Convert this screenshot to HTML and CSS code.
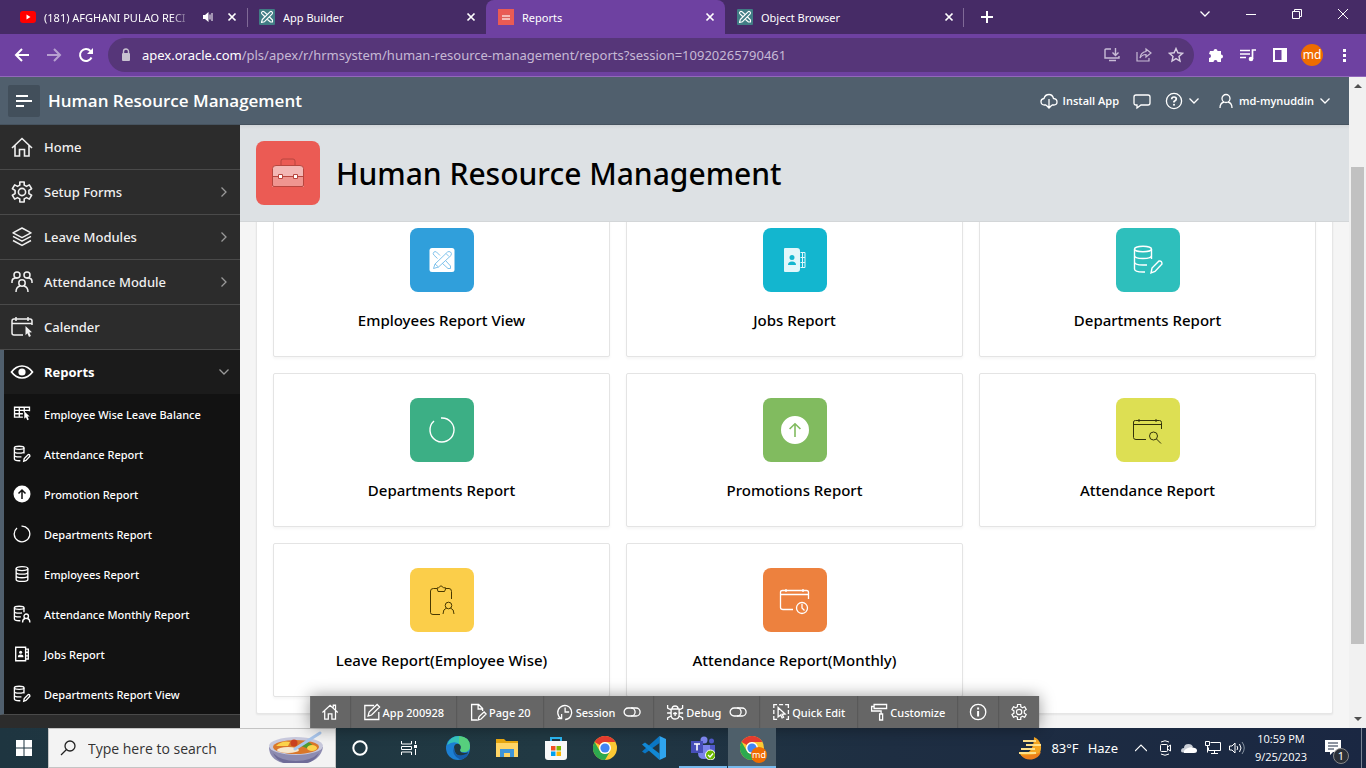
FILE: index.html
```html
<!DOCTYPE html>
<html lang="en">
<head>
<meta charset="utf-8">
<title>Reports</title>
<link rel="stylesheet" href="styles.css">
</head>
<body>
<svg class="sprite" aria-hidden="true">
  <symbol id="apex" viewBox="0 0 16 16"><rect width="16" height="16" rx="1" fill="#417d85"/><g fill="none" stroke="#fff" stroke-width="1.1" stroke-linejoin="round"><path d="M2.500 13.500l.8-3L11 2.800q1-.9 2 .1t.2 2L5.500 12.700zM8 5.500L5 2.700q-1-.8-2 .1t0 2L5.700 7.500M10.500 8l3 3v2h-2l-3-2.500"/></g></symbol>
  <symbol id="close" viewBox="0 0 16 16"><path d="M4.500 4.500l7 7m0-7l-7 7" stroke="currentColor" stroke-width="1.700"/></symbol>
  <symbol id="down" viewBox="0 0 12 12"><path d="M1.500 3.500L6 8l4.500-4.500" fill="none" stroke="currentColor" stroke-width="1.300"/></symbol>
  <symbol id="right" viewBox="0 0 12 12"><path d="M3.500 1.500L8 6l-4.500 4.500" fill="none" stroke="currentColor" stroke-width="1.300"/></symbol>
  <symbol id="home" viewBox="0 0 24 24"><path d="M2 13L12 3.500 22 13M5 10.500V21h4.500v-6.500h5V21H19V10.500" fill="none" stroke="currentColor" stroke-width="1.600"/></symbol>
  <symbol id="gear" viewBox="0 0 24 24"><g fill="none" stroke="currentColor" stroke-width="1.600" stroke-linejoin="round"><path d="M9.800 2h4.400v3.100l2.300 1.300 2.800-1.500 2.300 3.800-2.700 1.700v3.200l2.700 1.700-2.300 3.800-2.800-1.500-2.300 1.300V22H9.800v-3.100l-2.300-1.300-2.800 1.500-2.300-3.800 2.700-1.700v-3.200L2.400 8.700l2.300-3.800 2.800 1.500 2.300-1.300z"/><circle cx="12" cy="12" r="3.600"/></g></symbol>
  <symbol id="layers" viewBox="0 0 24 24"><g fill="none" stroke="currentColor" stroke-width="1.500" stroke-linejoin="round"><path d="M12 3l9 4.800-9 4.800-9-4.800zM3 11.300l9 4.900 9-4.900M3 15.500l9 4.900 9-4.900"/></g></symbol>
  <symbol id="users" viewBox="0 0 24 24"><g fill="none" stroke="currentColor" stroke-width="1.500"><circle cx="7" cy="5" r="3"/><circle cx="17" cy="5" r="3"/><circle cx="12" cy="13" r="3.200"/><path d="M2 13v-1.500q0-3 3-3.500h2.500M22 13v-1.500q0-3-3-3.500h-2.500M6 22q0-5 4-6M18 22q0-5-4-6"/></g></symbol>
  <symbol id="calcur" viewBox="0 0 24 24"><path d="M13 20H4q-2 0-2-2V6q0-2 2-2h16q2 0 2 2v4M2 8.500h20M6 2v4M18 2v4" fill="none" stroke="currentColor" stroke-width="1.500"/><path d="M15.500 11l6.500 6.200-2.700.3 1.600 3.600-1.900.9-1.600-3.700-1.900 1.900z" fill="currentColor"/></symbol>
  <symbol id="eye" viewBox="0 0 24 24"><path d="M1.500 12Q6 6 12 6t10.500 6Q18 18 12 18T1.500 12z" fill="none" stroke="currentColor" stroke-width="1.700"/><circle cx="12" cy="12" r="3.600" fill="currentColor"/></symbol>
  <symbol id="tablecur" viewBox="0 0 20 20"><path d="M11 13.500H1.700v-11h16.600V7M1.700 6h16.600M1.700 9.700H11M7 2.500v11M12.500 2.500V8" fill="none" stroke="currentColor" stroke-width="1.500"/><path d="M12.500 7l6 5.700-2.400.2 1.500 3.300-1.700.8-1.500-3.300-1.900 1.600z" fill="currentColor"/></symbol>
  <symbol id="dbedit" viewBox="0 0 32 32"><g fill="none" stroke="currentColor"><ellipse cx="11" cy="5" rx="8.500" ry="2.800"/><path d="M2.500 5v20q0 3 8.500 3h2M19.500 5v10M2.500 11.500q0 3 8.500 3t8.500-3M2.500 18q0 3 8.500 3h4M19 29l1-5 7-7q3-.5 3 3l-7 7.500z"/></g></symbol>
  <symbol id="dbuser" viewBox="0 0 32 32"><g fill="none" stroke="currentColor"><ellipse cx="11" cy="5" rx="8.500" ry="2.800"/><path d="M2.500 5v20q0 3 8.500 3h2M19.500 5v8M2.500 11.500q0 3 8.500 3 4 0 5-.4M2.500 18q0 3 8.500 3h3M17 31q0-6 4.500-7M30 31q0-6-4.500-7"/><circle cx="23.500" cy="20" r="4"/></g></symbol>
  <symbol id="db" viewBox="0 0 20 20"><g fill="none" stroke="currentColor" stroke-width="1.500"><ellipse cx="10" cy="4" rx="6.500" ry="2.200"/><path d="M3.500 4v12q0 2.200 6.500 2.200t6.500-2.200V4M3.500 8q0 2.200 6.500 2.200T16.500 8M3.500 12q0 2.200 6.500 2.200t6.500-2.200"/></g></symbol>
  <symbol id="upcircle" viewBox="0 0 32 32"><path fill-rule="evenodd" fill="currentColor" d="M16 2a14 14 0 1 0 0 28 14 14 0 1 0 0-28zM15.200 11.600l-4 4-1.200-1.200 6-5.600 6 5.600-1.200 1.200-4-4V23h-1.600z"/></symbol>
  <symbol id="upbold" viewBox="0 0 18 18"><circle cx="9" cy="9" r="8.500" fill="currentColor"/><path d="M9 14V5M5.500 8.500L9 5l3.500 3.500" fill="none" stroke="#121212" stroke-width="1.500"/></symbol>
  <symbol id="ring" viewBox="0 0 32 32"><path d="M15 4a12 12 0 1 1-7 3" fill="none" stroke="currentColor"/></symbol>
  <symbol id="book" viewBox="0 0 20 20"><g fill="none" stroke="currentColor" stroke-width="1.500"><path d="M3 2.500h11v15H3zM14 4.500h3v11h-3M14 8h3M14 12h3"/></g><circle cx="8.500" cy="8" r="1.700" fill="currentColor"/><path d="M5.500 13.500v-1.200q0-1.800 3-1.800t3 1.800v1.200z" fill="currentColor"/></symbol>
  <symbol id="bookfill" viewBox="0 0 32 32"><path fill="#e2f7fb" fill-rule="evenodd" d="M6 4h12q3 0 3 3v18q0 3-3 3H6q-1 0-1-1V5q0-1 1-1zm7 7a2.500 2.500 0 1 0 0 5 2.500 2.500 0 1 0 0-5zm-4 10h8q0-3.500-4-3.500T9 21z"/><path d="M21.500 8.500H26v15h-4.500M21.500 13.500H26M21.500 18.500H26M23.500 8.500v15" fill="none" stroke="#e2f7fb"/></symbol>
  <symbol id="tools" viewBox="0 0 32 32"><rect x="3.500" y="4" width="25" height="24" rx="2.500" fill="#fff"/><g fill="none" stroke="#7fc2ec"><path d="M7.500 24.500l1.500-4.500L21.500 8q1.500-1 3 0t.5 3.500L12.500 23zM14 11.500L10.500 8q-1.500-1-2.700.2t0 2.800l3.700 3.500M20 17l4.500 5v2.500H22l-6-5.500M20 9.500l3 3M9 20l3.500 3"/></g></symbol>
  <symbol id="calsearch" viewBox="0 0 32 32"><g fill="none" stroke="currentColor"><path d="M14 25.500H4q-2.500 0-2.500-2V8q0-1.500 2-1.500h24q2 0 2 2V15M1.500 10.500h28M7 5v3M24 5v3"/><circle cx="21.500" cy="22" r="4"/><path d="M24.500 25l4.500 4.500"/></g></symbol>
  <symbol id="calclock" viewBox="0 0 32 32"><g fill="none" stroke="currentColor" stroke-width="1.300"><path d="M14 25.500H4q-2.500 0-2.500-2V8q0-1.500 2-1.500h24q2 0 2 2V15M1.500 10.500h28M7 5v3M24 5v3"/><circle cx="23" cy="24" r="5.500"/><path d="M23 20v4l2.500 2.500"/></g></symbol>
  <symbol id="clip" viewBox="0 0 32 32"><g fill="none" stroke="currentColor"><path d="M14 30.500H7q-2.500 0-2.500-2V7q0-2.500 3-2.500H11M19.500 4.500H23q2.500 0 2.500 3V15M11 4q2 0 3-1.500 1-1.500 2 0Q17 4 20 4l-1.500 3.500H12zM17 30q0-5 3.500-6M28 30q0-5-3.500-6"/><circle cx="22.500" cy="21.500" r="3.300"/></g></symbol>
  <symbol id="case" viewBox="0 0 32 32"><path d="M9 8.500V4q0-2 2-2h10q2 0 2 2v4.500" fill="none" stroke="#b8463f"/><path d="M4 8.500h24q3.500 0 3.500 3V30H.5V11.500q0-3 3.500-3z" fill="#f3b7b5"/><path d="M.5 19.500h31V30H.5z" fill="#ef9590"/><g stroke="#b8463f"><path d="M4 8.500h24q3.500 0 3.500 3V28q0 1.500-1.500 1.500H2Q.5 29.500.5 28V11.500q0-3 3.500-3zM.5 19.500h31" fill="none"/><path d="M6.500 17.500h4v4h-4zM21.500 17.500h4v4h-4z" fill="#fff"/></g></symbol>
  <symbol id="chrome" viewBox="0 0 24 24"><circle cx="12" cy="12" r="12" fill="#fcc934"/><path d="M1.600 6A12 12 0 0 1 22.400 6H12a6 6 0 0 0-5.200 3z" fill="#e33b2e"/><path d="M1.600 6A12 12 0 0 0 12 24l5.200-9a6 6 0 0 1-10.400 0z" fill="#2da94f"/><circle cx="12" cy="12" r="6" fill="#fff"/><circle cx="12" cy="12" r="4.600" fill="#4285f4"/></symbol>
</svg>

<header class="browser">
  <div class="tabs">
    <div class="tab"><svg class="i16" viewBox="0 0 16 16"><rect y="2" width="16" height="12" rx="3" fill="#f00"/><path d="M6.500 5.500v5l4-2.500z" fill="#fff"/></svg><span class="tab-title fade">(181) AFGHANI PULAO RECI</span><svg class="i16" viewBox="0 0 16 16"><path d="M3 6h2l3.500-3v10L5 10H3z" fill="#fff"/><path d="M10 5.500v5M12 4v8" stroke="#fff"/></svg><button class="x" aria-label="Close tab"><svg class="i16"><use href="#close"/></svg></button></div>
    <div class="tab sep"><svg class="i16"><use href="#apex"/></svg><span class="tab-title">App Builder</span><button class="x" aria-label="Close tab"><svg class="i16"><use href="#close"/></svg></button></div>
    <div class="tab active"><svg class="i16" viewBox="0 0 16 16"><rect width="16" height="16" fill="#ea5b54"/><rect x="4" y="6" width="8" height="5" fill="#f6b9b5"/><path d="M4 8.500h8M6 5.500h4" stroke="#d9625b"/></svg><span class="tab-title">Reports</span><button class="x" aria-label="Close tab"><svg class="i16"><use href="#close"/></svg></button></div>
    <div class="tab last"><svg class="i16"><use href="#apex"/></svg><span class="tab-title">Object Browser</span><button class="x" aria-label="Close tab"><svg class="i16"><use href="#close"/></svg></button></div>
    <button class="newtab" aria-label="New tab"><svg class="i16" viewBox="0 0 16 16"><path d="M8 2v12M2 8h12" stroke="#fff" stroke-width="2"/></svg></button>
    <div class="winctl">
      <button aria-label="Search tabs"><svg class="i12"><use href="#down"/></svg></button>
      <button aria-label="Minimize"><svg class="i12" viewBox="0 0 12 12"><path d="M1 6.500h10" stroke="#fff"/></svg></button>
      <button aria-label="Restore"><svg class="i12" viewBox="0 0 12 12"><path d="M1.500 3.500h7v7h-7zM3.500 3.500v-2h7v7h-2" fill="none" stroke="#fff"/></svg></button>
      <button aria-label="Close"><svg class="i12" viewBox="0 0 12 12"><path d="M1 1l10 10M11 1L1 11" stroke="#fff"/></svg></button>
    </div>
  </div>
  <div class="toolbar">
    <button class="tb" aria-label="Back"><svg class="i16" viewBox="0 0 16 16"><path d="M15 8H2M8 2L2 8l6 6" fill="none" stroke="#fff" stroke-width="2"/></svg></button>
    <button class="tb dim" aria-label="Forward"><svg class="i16" viewBox="0 0 16 16"><path d="M1 8h13M8 2l6 6-6 6" fill="none" stroke="#fff" stroke-width="2"/></svg></button>
    <button class="tb" aria-label="Reload"><svg class="i16" viewBox="0 0 16 16"><path d="M13.500 10.500A6 6 0 1 1 12.500 4" fill="none" stroke="#fff" stroke-width="2"/><path d="M15 1v6H9z" fill="#fff"/></svg></button>
    <div class="omni">
      <svg class="lock i16" viewBox="0 0 16 16"><rect x="4" y="6" width="8" height="8" rx="1" fill="#c8c2d0"/><path d="M5.500 6V4.500a2.500 2.500 0 0 1 5 0V6" fill="none" stroke="#c8c2d0" stroke-width="1.400"/></svg>
      <a class="url" href="#"><b>apex.oracle.com</b>/pls/apex/r/hrmsystem/human-resource-management/reports?session=10920265790461</a>
      <button class="tb" aria-label="Install"><svg class="i16" viewBox="0 0 16 16"><path d="M7 2H2q-1 0-1 1v8h14V9M5 13.500h7M11.500 1v7M8.500 5.500l3 3 3-3" fill="none" stroke="#c8bcd6" stroke-width="1.400"/></svg></button>
      <button class="tb" aria-label="Share"><svg class="i16" viewBox="0 0 16 16"><path d="M1 5v9h12v-3M10 2l5 4-5 4V7.500Q6 7.500 4 11q.5-5.500 6-6.500z" fill="none" stroke="#c8bcd6" stroke-width="1.200"/></svg></button>
      <button class="tb" aria-label="Bookmark"><svg class="i16" viewBox="0 0 16 16"><path d="M8 1.500l1.900 4.300 4.600.5-3.500 3.100 1 4.600-4-2.400L4 14l1-4.600L1.500 6.300l4.600-.5z" fill="none" stroke="#d8cfe2" stroke-width="1.400"/></svg></button>
    </div>
    <button class="tb" aria-label="Extensions"><svg class="i16" viewBox="0 0 16 16"><path d="M2 4h3.500a2 2 0 0 1 4 0H13v3.500a2 2 0 0 1 0 4V15H9.500a2 2 0 0 0-4 0H1v-4a2 2 0 0 0 0-4z" fill="#fff"/></svg></button>
    <button class="tb" aria-label="Media"><svg class="i16" viewBox="0 0 16 16"><path d="M0 3.500h10M0 7h10M0 10.500h6M12.500 12V3H16" fill="none" stroke="#fff" stroke-width="1.700"/><circle cx="11" cy="12" r="2.300" fill="#fff"/></svg></button>
    <button class="tb" aria-label="Side panel"><svg class="i16" viewBox="0 0 16 16"><path d="M2 2h12v12H2z" fill="none" stroke="#fff" stroke-width="2"/><path d="M9.500 2H14v12H9.500z" fill="#fff"/></svg></button>
    <button class="tb" aria-label="Profile"><span class="avatar">md</span></button>
    <button class="tb" aria-label="Menu"><svg class="i16" viewBox="0 0 16 16"><path d="M7 2h3v3H7zM7 7h3v3H7zM7 12h3v3H7z" fill="#fff"/></svg></button>
  </div>
</header>

<div class="viewport">
  <div class="app">
    <header class="apphead">
      <button class="burger" aria-label="Toggle navigation"><svg class="i16" viewBox="0 0 16 16"><path d="M0 3h12M0 8h16M0 13h8" stroke="#fff" stroke-width="2"/></svg></button>
      <a class="brand" href="#">Human Resource Management</a>
      <nav class="headnav">
        <a href="#"><svg class="i18" viewBox="0 0 18 18"><path d="M6 13H4.500Q1 13 1 9.500 1 7 4 6.500 5 2.500 9 2.500q3.500 0 4.500 4 3.500.3 3.500 3.500t-3.500 3H12M9 7v9M6 13l3 3 3-3" fill="none" stroke="currentColor" stroke-width="1.300"/></svg>Install App</a>
        <a href="#" aria-label="Feedback"><svg class="i18" viewBox="0 0 18 18"><path d="M3 3h12q2 0 2 2v6q0 2-2 2H8l-4 3v-3H3q-2 0-2-2V5q0-2 2-2z" fill="none" stroke="currentColor" stroke-width="1.300"/></svg></a>
        <a href="#" aria-label="Help"><svg class="i18" viewBox="0 0 18 18"><circle cx="9" cy="9" r="7.600" fill="none" stroke="currentColor" stroke-width="1.300"/><path d="M6.700 7.200Q6.700 5 9 5t2.300 2Q11.300 8.300 9 9.500v1" fill="none" stroke="currentColor" stroke-width="1.700"/><circle cx="9" cy="12.800" r="1" fill="currentColor"/></svg><svg class="i12"><use href="#down"/></svg></a>
        <a class="me" href="#"><svg class="i16" viewBox="0 0 16 16"><circle cx="8" cy="5.500" r="4" fill="none" stroke="currentColor" stroke-width="1.300"/><path d="M2 15q0-5 4-6M14 15q0-5-4-6" fill="none" stroke="currentColor" stroke-width="1.300"/></svg>md-mynuddin<svg class="i12"><use href="#down"/></svg></a>
      </nav>
    </header>
    <div class="body">
      <nav class="side">
        <a class="item" href="#"><svg class="i24"><use href="#home"/></svg><span>Home</span></a>
        <a class="item" href="#"><svg class="i24"><use href="#gear"/></svg><span>Setup Forms</span><svg class="i12 chev"><use href="#right"/></svg></a>
        <a class="item" href="#"><svg class="i24"><use href="#layers"/></svg><span>Leave Modules</span><svg class="i12 chev"><use href="#right"/></svg></a>
        <a class="item" href="#"><svg class="i24"><use href="#users"/></svg><span>Attendance Module</span><svg class="i12 chev"><use href="#right"/></svg></a>
        <a class="item" href="#"><svg class="i24"><use href="#calcur"/></svg><span>Calender</span></a>
        <div class="group">
          <a class="item current" href="#"><svg class="i24"><use href="#eye"/></svg><span>Reports</span><svg class="i12 chev"><use href="#down"/></svg></a>
          <a class="sub" href="#"><svg class="i18"><use href="#tablecur"/></svg><span>Employee Wise Leave Balance</span></a>
          <a class="sub" href="#"><svg class="i18 bold"><use href="#dbedit"/></svg><span>Attendance Report</span></a>
          <a class="sub" href="#"><svg class="i18"><use href="#upbold"/></svg><span>Promotion Report</span></a>
          <a class="sub" href="#"><svg class="i18" viewBox="0 0 18 18"><path d="M8.500 1.200a7.800 7.800 0 1 1-4.500 1.800" fill="none" stroke="currentColor" stroke-width="1.300"/></svg><span>Departments Report</span></a>
          <a class="sub" href="#"><svg class="i18"><use href="#db"/></svg><span>Employees Report</span></a>
          <a class="sub" href="#"><svg class="i18 bold"><use href="#dbuser"/></svg><span>Attendance Monthly Report</span></a>
          <a class="sub" href="#"><svg class="i18"><use href="#book"/></svg><span>Jobs Report</span></a>
          <a class="sub" href="#"><svg class="i18 bold"><use href="#dbedit"/></svg><span>Departments Report View</span></a>
        </div>
      </nav>
      <main class="main">
        <div class="hero"><span class="tile red"><svg class="i32"><use href="#case"/></svg></span><h1>Human Resource Management</h1></div>
        <div class="scroll">
          <div class="panel">
            <a class="card" href="#"><span class="tile blue"><svg class="i32"><use href="#tools"/></svg></span><h3>Employees Report View</h3></a>
            <a class="card" href="#"><span class="tile cyan"><svg class="i32"><use href="#bookfill"/></svg></span><h3>Jobs Report</h3></a>
            <a class="card" href="#"><span class="tile teal"><svg class="i32 firm"><use href="#dbedit"/></svg></span><h3>Departments Report</h3></a>
            <a class="card" href="#"><span class="tile green"><svg class="i32 firm"><use href="#ring"/></svg></span><h3>Departments Report</h3></a>
            <a class="card" href="#"><span class="tile lime"><svg class="i32"><use href="#upcircle"/></svg></span><h3>Promotions Report</h3></a>
            <a class="card" href="#"><span class="tile citron"><svg class="i32"><use href="#calsearch"/></svg></span><h3>Attendance Report</h3></a>
            <a class="card" href="#"><span class="tile yellow"><svg class="i32"><use href="#clip"/></svg></span><h3>Leave Report(Employee Wise)</h3></a>
            <a class="card" href="#"><span class="tile orange"><svg class="i32"><use href="#calclock"/></svg></span><h3>Attendance Report(Monthly)</h3></a>
          </div>
        </div>
      </main>
    </div>
    <div class="devbar">
      <button class="tool" aria-label="Home"><svg class="i18" viewBox="0 0 20 20"><path d="M1.500 10.500L10 2.500l8.500 8M4 9v9h4v-6h4v6h4V9M13.500 5V2.500H16v5" fill="none" stroke="currentColor" stroke-width="1.400"/></svg></button>
      <button><svg class="i18" viewBox="0 0 18 18"><path d="M11 2.500H1.700v14h14V9M5 13l1-4 8-7.500 2.500 2.500-8 8z" fill="none" stroke="currentColor" stroke-width="1.300"/></svg>App 200928</button>
      <button><svg class="i18" viewBox="0 0 18 18"><path d="M8 17H2.500V1.500h7l4 4V8M9 1.500V6h4M9 17l1-3.500 5-4.500 2 2-5 5z" fill="none" stroke="currentColor" stroke-width="1.300"/></svg>Page 20</button>
      <button><svg class="i18" viewBox="0 0 18 18"><path d="M5 15.500A7 7 0 1 1 9 16.500M1.500 15.500H5.500V11M9 4.500V9h4" fill="none" stroke="currentColor" stroke-width="1.300"/></svg>Session<svg class="toggle" viewBox="0 0 18 10"><rect x="1" y="1" width="16" height="8" rx="4" fill="none" stroke="currentColor" stroke-width="1.300"/><path d="M8 1a4 4 0 0 1 0 8" fill="none" stroke="currentColor" stroke-width="1.300"/></svg></button>
      <button><svg class="i18" viewBox="0 0 18 18"><path d="M5 6h8v6q0 4-4 4t-4-4zM6 6q0-3 3-3t3 3M1.500 2v3L5 7M16.500 2v3L13 7M1 10h4M13 10h4M1.500 17v-2L5 13M16.500 17v-2L13 13M9 9v4M7 10.500h4" fill="none" stroke="currentColor" stroke-width="1.300"/></svg>Debug<svg class="toggle" viewBox="0 0 18 10"><rect x="1" y="1" width="16" height="8" rx="4" fill="none" stroke="currentColor" stroke-width="1.300"/><path d="M8 1a4 4 0 0 1 0 8" fill="none" stroke="currentColor" stroke-width="1.300"/></svg></button>
      <button><svg class="i18" viewBox="0 0 18 18"><path d="M1.700 5V1.700H5M7 1.700h4M13 1.700h3.300V5M16.300 7v4M16.300 13v3.300H14M5 16.300H1.700V13M1.700 7v4" fill="none" stroke="currentColor" stroke-width="1.300"/><path d="M6 4.500l7 6.500-3 .3 1.500 3-1.500.7-1.500-3L6 14z" fill="none" stroke="currentColor" stroke-width="1.300"/></svg>Quick Edit</button>
      <button><svg class="i18" viewBox="0 0 18 18"><path d="M4 1.500h12.500v4H4zM4 3.500H1.500V8L11 8v3M9.500 11h3v6h-3z" fill="none" stroke="currentColor" stroke-width="1.300"/></svg>Customize</button>
      <button class="tool" aria-label="Info"><svg class="i18" viewBox="0 0 18 18"><circle cx="9" cy="9" r="7.700" fill="none" stroke="currentColor" stroke-width="1.300"/><path d="M9 4.500v2M9 8v5.500" stroke="currentColor" stroke-width="2"/></svg></button>
      <button class="tool" aria-label="Settings"><svg class="i18"><use href="#gear"/></svg></button>
    </div>
  </div>
  <div class="rail"><svg class="arr" viewBox="0 0 8 4"><path d="M0 4l4-4 4 4z" fill="#505050"/></svg><div class="track"><div class="thumb"></div></div><svg class="arr" viewBox="0 0 8 4"><path d="M0 0l4 4 4-4z" fill="#505050"/></svg></div>
</div>

<footer class="taskbar">
  <button class="slot" aria-label="Start"><svg class="i16" viewBox="0 0 16 16"><path d="M0 0h7.500v7.500H0zM8.500 0H16v7.500H8.500zM0 8.500h7.500V16H0zM8.500 8.500H16V16H8.500z" fill="#fff"/></svg></button>
  <label class="search"><svg class="i16" viewBox="0 0 16 16"><circle cx="10" cy="6" r="5" fill="none" stroke="#222" stroke-width="1.300"/><path d="M6.500 9.500L1 15" stroke="#222" stroke-width="1.300"/></svg><input type="text" aria-label="Search" placeholder="Type here to search">
    <svg class="soup" viewBox="0 0 56 34"><path d="M1 16q0 12 14 16h24q14-4 16-16z" fill="#8d8bb0"/><path d="M5 22q8 8 23 8t23-8q-4 8-12 10H16Q8 29 5 22z" fill="#6f6c98"/><ellipse cx="28" cy="15" rx="27" ry="9" fill="#c7c8dc"/><ellipse cx="28" cy="16" rx="23" ry="7" fill="#d9772b"/><ellipse cx="20" cy="19" rx="11" ry="3" fill="#f6e8cf"/><path d="M8 15q6-6 14-4l-2 4z" fill="#fbd34b"/><circle cx="26" cy="12" r="3.500" fill="#c9401f"/><path d="M33 15q4-6 9-3t-1 6z" fill="#4e9a2f"/><ellipse cx="44" cy="17" rx="5" ry="3" fill="#fbd34b"/><path d="M27 18L52 2" stroke="#a9c6ec" stroke-width="3" stroke-linecap="round"/></svg>
  </label>
  <div class="pins">
    <button class="slot" aria-label="Cortana"><svg class="i16" viewBox="0 0 16 16"><circle cx="8" cy="8" r="6.700" fill="none" stroke="#fff" stroke-width="2"/></svg></button>
    <button class="slot" aria-label="Task view"><svg class="i16" viewBox="0 0 16 16"><path d="M.5 1v3h10V1M.5 15v-3h10v3M.5 6.500h10v3H.5zM14.500 1v3M14.500 9v6" fill="none" stroke="#fff"/><path d="M13 5h3v3h-3z" fill="#fff"/></svg></button>
    <button class="slot" aria-label="Edge"><svg class="i24" viewBox="0 0 24 24"><circle cx="12" cy="12" r="12" fill="#1c7fd2"/><path d="M1 9Q4 0 13 0q11 1 11 10 0 6-6 6-4 0-4-2 2-3-1-6-5-4-12 1z" fill="#35c1b8"/><path d="M13 0q11 1 11 10 0 6-6 6-4 0-4-2 2-3-1-6z" fill="#62d36a" opacity=".75"/><path d="M8 11q1-4 5-3 3 2 1 6 0 3 5 3l3.500-.8Q20 20 16 20q-8 0-8-9z" fill="#203840"/><path d="M8 11q-3 8 6 12.500Q20 23 22.500 17 8 24 8 11z" fill="#155ba8"/></svg></button>
    <button class="slot" aria-label="File Explorer"><svg class="i24" viewBox="0 0 24 24"><path d="M1 3h8l2 2h12v16H1z" fill="#e5a50f"/><path d="M1 7h22v14H1z" fill="#ffd566"/><path d="M5 13h14v8h-4v-4H9v4H5z" fill="#3f95d9"/></svg></button>
    <button class="slot" aria-label="Store"><svg class="i24" viewBox="0 0 24 24"><path d="M7 6V2h10v4" fill="none" stroke="#29b0ea" stroke-width="2"/><path d="M1 5h22v16q0 3-3 3H4q-3 0-3-3z" fill="#f8f8f8"/><path d="M7 10h4.500v4.500H7z" fill="#f15022"/><path d="M12.500 10H17v4.500h-4.500z" fill="#7eb900"/><path d="M7 15.500h4.500V20H7z" fill="#00a1ee"/><path d="M12.500 15.500H17V20h-4.500z" fill="#fdb800"/></svg></button>
    <button class="slot" aria-label="Chrome"><svg class="i24"><use href="#chrome"/></svg></button>
    <button class="slot" aria-label="VS Code"><svg class="i24" viewBox="0 0 24 24"><path d="M17.500 0v7L3 17.500l-3-2z" fill="#0a76c4"/><path d="M0 8.500l3-2 14.500 11v6.500z" fill="#1188d5"/><path d="M17.500 0L24 3v18l-6.500 3z" fill="#2fa4ee"/></svg></button>
    <button class="slot open" aria-label="Teams"><svg class="i24" viewBox="0 0 24 24"><circle cx="13" cy="4" r="3.500" fill="#7b83eb"/><circle cx="20.500" cy="5" r="2.500" fill="#5059c9"/><path d="M17 9h7v7q0 4-5 4z" fill="#5059c9"/><path d="M7 9h12v8q0 6-6 6t-6-6z" fill="#7b83eb"/><path d="M0 5h12v12H0z" fill="#464eb8"/><path d="M3 8h6M6 8v6.500" stroke="#fff" stroke-width="1.600"/><circle cx="19.500" cy="19" r="5" fill="#6bb700" stroke="#fff"/><path d="M17 19l2 2 3-3.500" fill="none" stroke="#fff" stroke-width="1.300"/></svg></button>
    <button class="slot open on" aria-label="Chrome, profile md"><svg class="i24"><use href="#chrome"/></svg><span class="badge">md</span></button>
  </div>
  <div class="tray">
    <button class="weather"><svg class="i24" viewBox="0 0 24 24"><path d="M16 1a11.500 11.500 0 1 1-14 17q14 1 14-17z" fill="#f5a623"/><path d="M3 19a11.500 11.500 0 0 0 20-3q-8 4-20 3z" fill="#ee7f1b"/><path d="M5 5h13M8 9h15M3 13h14M1 17h17" stroke="#ffe08a" stroke-width="1.800"/></svg><span>83°F</span><span>Haze</span></button>
    <button class="ti" aria-label="Show hidden icons"><svg class="i12" viewBox="0 0 12 12"><path d="M0 9l6-6 6 6" fill="none" stroke="#fff" stroke-width="1.200"/></svg></button>
    <button class="ti" aria-label="Meet now"><svg class="i16" viewBox="0 0 16 16"><rect x="3.500" y="4.500" width="7" height="7" rx="1" fill="none" stroke="#fff"/><path d="M10.500 7l3-2v6l-3-2M4 2q4-2.500 8 0M4 14q4 2.500 8 0" fill="none" stroke="#fff"/></svg></button>
    <button class="ti" aria-label="OneDrive"><svg class="i16" viewBox="0 0 16 16"><path d="M0 11q0-3 3-3 0-4 4.500-4Q11 4 12 7l-8 5.500Q0 13 0 11z" fill="#c9ced6"/><path d="M3 13q-1-3 4-5 2-1 5-.5 4 .5 4 3t-3 2.500z" fill="#fff"/></svg></button>
    <button class="ti" aria-label="Network"><svg class="i16" viewBox="0 0 16 16"><path d="M5.500 2.500h10v8H3.500v-3M9.500 10.500v3M6 13.500h7M.5 1.500h4v4h-4zM2.500 5.500v7" fill="none" stroke="#fff"/></svg></button>
    <button class="ti" aria-label="Volume"><svg class="i16" viewBox="0 0 16 16"><path d="M.5 6H3l3-3v10L3 10H.5zM8 6q1.500 2 0 4M10.500 4q3 4 0 8" fill="none" stroke="#fff"/><path d="M13 2q4.500 6 0 12" fill="none" stroke="#8793a1"/></svg></button>
    <div class="clock"><time>10:59 PM</time><time>9/25/2023</time></div>
    <button class="slot" aria-label="Notifications"><svg class="i24" viewBox="0 0 24 24"><path d="M0 4h16v12H8l-3 3v-3H0z" fill="#fff"/><path d="M3 7h10M3 10h10M3 13h6" stroke="#1c2b42"/></svg><span class="count">1</span></button>
    <div class="peek"></div>
  </div>
</footer>
</body>
</html>
```
FILE: styles.css
```css
* { box-sizing: border-box; }
body {
  margin: 0;
  height: 100vh;
  display: flex;
  flex-direction: column;
  overflow: hidden;
  font-family: "Noto Sans", "Open Sans", sans-serif;
  font-size: 12px;
  color: #000;
}
button { border: 0; padding: 0; background: none; color: inherit; font: inherit; display: flex; align-items: center; justify-content: center; }
a { color: inherit; text-decoration: none; }
svg { flex: none; display: block; }
.sprite { position: absolute; width: 0; height: 0; }
.i12 { width: 12px; height: 12px; }
.i16 { width: 16px; height: 16px; }
.i18 { width: 18px; height: 18px; }
.i24 { width: 24px; height: 24px; }
.i32 { width: 32px; height: 32px; }

.browser { background: #462b66; color: #fff; }
.tabs { display: flex; height: 34px; padding-left: 8px; font-size: 11px; }
.tab { flex: 0 1 239px; display: flex; align-items: center; gap: 8px; padding: 0 7px 0 12px; min-width: 0; }
.tab-title { flex: 1; overflow: hidden; white-space: nowrap; }
.fade { mask-image: linear-gradient(to right, #000 85%, transparent); }
.sep { background: linear-gradient(#806a97, #806a97) 0 8px / 1px 19px no-repeat; }
.active { background: #6e41a1; border-radius: 8px 8px 0 0; }
.last { background: linear-gradient(#806a97, #806a97) 100% 8px / 1px 19px no-repeat; }
.newtab { width: 46px; }
.winctl { display: flex; margin-left: auto; padding-bottom: 6px; }
.winctl button { width: 46px; }
.toolbar { display: flex; align-items: center; height: 43px; padding: 0 6px; background: #6e41a1; border-bottom: 1px solid #9268bb; }
.tb { width: 32px; height: 32px; flex: none; }
.dim { opacity: .5; }
.omni { flex: 1; min-width: 0; display: flex; align-items: center; height: 34px; margin: 0 6px; padding: 0 2px 0 10px; border-radius: 17px; background: #563679; }
.url { flex: 1; min-width: 0; margin-left: 8px; overflow: hidden; white-space: nowrap; font-size: 13px; color: #c6b9d5; }
.url b { font-weight: 400; color: #fff; }
.avatar { width: 22px; height: 22px; border-radius: 50%; background: #ef6c00; font-size: 12px; line-height: 21px; text-align: center; }

.viewport { flex: 1; min-height: 0; display: flex; }
.app { flex: 1; min-width: 0; display: flex; flex-direction: column; position: relative; }
.apphead { display: flex; align-items: center; height: 48px; padding: 0 18px 0 8px; background: #505f6d; border-bottom: 1px solid #46535f; color: #fff; }
.burger { width: 32px; height: 32px; border-radius: 2px; background: #424f5b; }
.brand { margin-left: 8px; font-family: "Open Sans", sans-serif; font-size: 17px; font-weight: 600; }
.headnav { display: flex; align-items: center; gap: 14px; margin-left: auto; font-family: "Open Sans", sans-serif; font-size: 11px; font-weight: 600; }
.headnav a { display: flex; align-items: center; gap: 5px; }
.me { margin-left: 4px; }
.body { flex: 1; min-height: 0; display: flex; }
.side { width: 240px; flex: none; overflow: hidden; background: #2c2c2c; color: #f0f0f0; }
.item { display: flex; align-items: center; gap: 10px; height: 45px; padding: 0 10px; border-bottom: 1px solid #4a4a4a; font-size: 13px; font-weight: 500; }
.chev { margin-left: auto; color: #999; }
.group { border-left: 4px solid #505f6d; border-bottom: 1px solid #4a4a4a; background: #121212; }
.current { height: 44px; padding-left: 6px; background: #1b1b1b; border: 0; font-family: "Open Sans", sans-serif; font-weight: 700; color: #fff; }
.sub { display: flex; align-items: center; gap: 13px; height: 40px; padding-left: 9px; font-size: 11px; font-weight: 500; color: #fff; }
.bold { stroke-width: 2.4; }
.firm { stroke-width: 1.4; }
.main { flex: 1; min-width: 0; display: flex; flex-direction: column; background: #f5f5f5; }
.hero { flex: none; display: flex; align-items: center; gap: 16px; height: 97px; padding: 0 16px; background: linear-gradient(#d2d6d9, #dde1e4 4px); border-bottom: 1px solid #d3d6d8; }
.hero h1 { margin: 0; font-size: 30px; font-weight: 500; }
.tile { width: 64px; height: 64px; flex: none; display: flex; align-items: center; justify-content: center; border-radius: 8px; color: #fff; }
.red { background: #eb5b54; }
.blue { background: #309fdb; }
.cyan { background: #13b6cf; }
.teal { background: #2ebfbc; }
.green { background: #3caf85; }
.lime { background: #81bb5f; }
.citron { background: #dddf53; color: #33330a; }
.yellow { background: #fbce4a; color: #493900; }
.orange { background: #ed813e; }
.scroll { flex: 1; min-height: 0; overflow: hidden; padding: 0 16px; }
.panel { display: grid; grid-template-columns: repeat(3, 1fr); gap: 16px; margin-top: -36px; padding: 16px; background: #fff; border: 1px solid #e6e6e6; border-radius: 2px; box-shadow: 0 1px 2px #0001; }
.card { display: flex; flex-direction: column; align-items: center; gap: 16px; height: 154px; padding-top: 24px; border: 1px solid #e4e4e4; border-radius: 2px; background: #fff; box-shadow: 0 2px 3px #0000000a; }
.card h3 { margin: 0; font-size: 15px; line-height: 24px; font-weight: 500; white-space: nowrap; }
.devbar { position: absolute; left: 50%; bottom: 0; transform: translateX(-50%); display: flex; height: 32px; background: #666; color: #fff; box-shadow: 0 0 16px #0006; font-size: 11px; font-weight: 500; white-space: nowrap; }
.devbar button { gap: 2px; padding: 0 12px; border-right: 1px solid #585858; }
.devbar .tool { padding: 0 11px; }
.devbar button:last-child { border: 0; }
.toggle { width: 18px; height: 10px; margin-left: 6px; }
.rail { width: 17px; flex: none; display: flex; flex-direction: column; align-items: center; padding: 7px 0; background: #f1f1f1; }
.arr { width: 8px; height: 4px; }
.track { flex: 1; width: 13px; padding: 79px 0 73px; }
.thumb { height: 100%; background: #c1c1c1; }

.taskbar { flex: none; display: flex; height: 40px; background: linear-gradient(90deg, #1e3540, #213943 40%, #1e2e42 65%, #1a2742); color: #fff; }
.slot { width: 48px; flex: none; position: relative; }
.search { width: 288px; display: flex; align-items: center; padding: 0 11px; background: #f3f3f3; border: 1px solid #c4c4c4; }
.search input { flex: 1; min-width: 0; margin-left: 12px; padding: 0; border: 0; background: none; font: inherit; font-family: "Open Sans", sans-serif; font-size: 14px; outline: 0; }
.search input::placeholder { color: #333; opacity: 1; }
.soup { width: 56px; height: 34px; }
.pins { display: flex; gap: 1px; }
.open { box-shadow: inset 0 -2px #76b9ed; }
.on { background: #4e5f6a; }
.badge { position: absolute; right: 9px; bottom: 5px; width: 16px; height: 16px; border-radius: 50%; background: #ef6c00; font-size: 9px; line-height: 15px; }
.tray { display: flex; margin-left: auto; }
.weather { gap: 9px; padding-right: 11px; font-size: 13px; }
.ti { width: 24px; }
.clock { width: 64px; display: flex; flex-direction: column; justify-content: center; text-align: center; line-height: 18px; font-family: "Open Sans", sans-serif; font-size: 11px; }
.count { position: absolute; right: 12px; bottom: 4px; width: 16px; height: 16px; border-radius: 50%; border: 1px solid #888; background: #2b3038; font-size: 11px; line-height: 14px; }
.peek { width: 5px; border-left: 1px solid #7a8494; }
```
